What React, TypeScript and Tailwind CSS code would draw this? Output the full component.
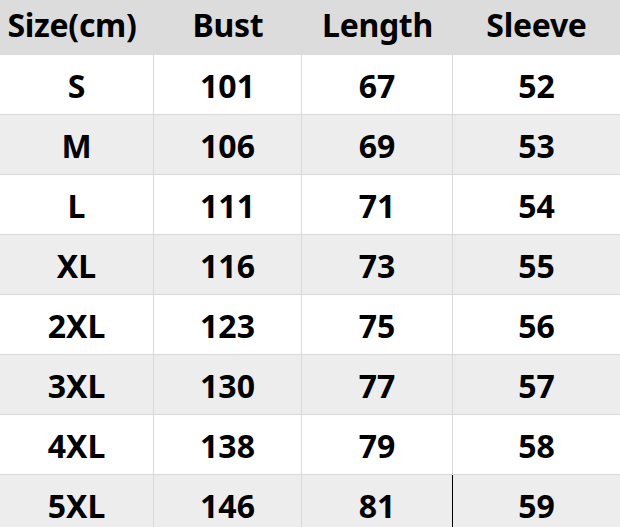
const rows = [
  ['S', '101', '67', '52'],
  ['M', '106', '69', '53'],
  ['L', '111', '71', '54'],
  ['XL', '116', '73', '55'],
  ['2XL', '123', '75', '56'],
  ['3XL', '130', '77', '57'],
  ['4XL', '138', '79', '58'],
  ['5XL', '146', '81', '59'],
];

const headers = ['Size(cm)', 'Bust', 'Length', 'Sleeve'];

export default function App() {
  return (
    <div
      className="w-[620px] h-[527px] overflow-hidden bg-white text-black font-bold text-[32px]"
      style={{ fontFamily: '"Noto Sans", "Open Sans", sans-serif' }}
    >
      {/* Header */}
      <div className="grid grid-cols-[154px_148px_151px_1fr] h-[55px] bg-[#dcdcdc]">
        {headers.map((h, j) => (
          <div
            key={h}
            className={
              'flex items-center justify-center leading-none pb-[5px] whitespace-nowrap tracking-[-0.3px] ' +
              (j === 0 ? 'pr-[10px]' : '')
            }
          >
            {h}
          </div>
        ))}
      </div>

      {rows.map((r, i) => (
        <div
          key={r[0]}
          className={
            'grid grid-cols-[154px_148px_151px_1fr] h-[60px] border-b border-[#d9d9d9] ' +
            (i % 2 === 0 ? 'bg-white' : 'bg-[#ededed]')
          }
        >
          {r.map((v, j) => (
            <div
              key={j}
              className={
                'flex items-center justify-center leading-none pt-[2px] ' +
                (j < 3
                  ? i === 7 && j === 2
                    ? 'border-r border-black'
                    : 'border-r border-[#d9d9d9]'
                  : '')
              }
            >
              {v}
            </div>
          ))}
        </div>
      ))}
    </div>
  );
}
